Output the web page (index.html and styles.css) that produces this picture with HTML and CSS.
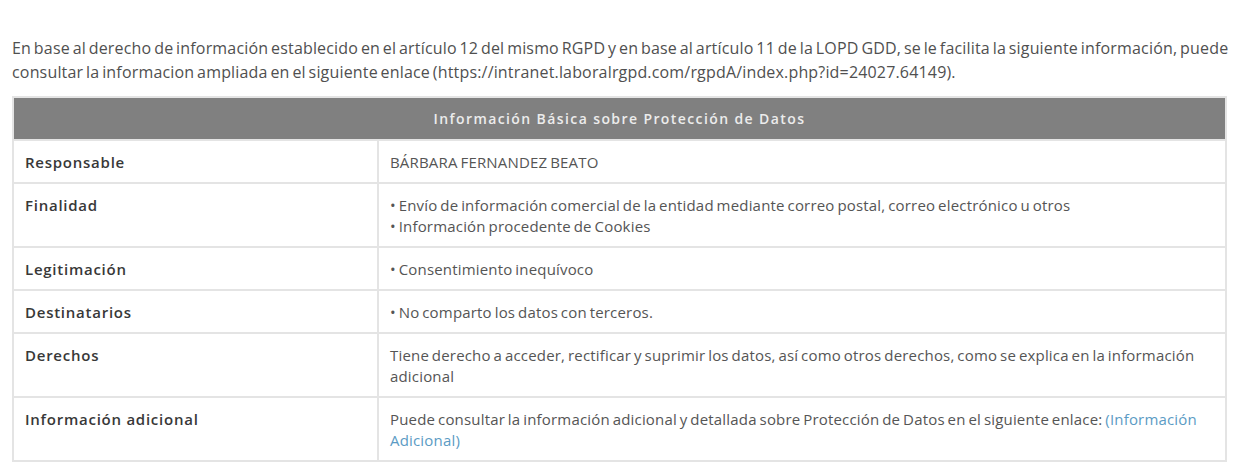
FILE: index.html
```html
<!DOCTYPE html>
<html lang="es">
<head>
  <meta charset="UTF-8" />
  <title>Protección de Datos</title>
  <link rel="stylesheet" href="styles.css">
</head>
<body>
  <p class="intro">En base al derecho de información establecido en el artículo 12 del mismo RGPD y en base al artículo 11 de la LOPD GDD, se le facilita la siguiente información, puede consultar la informacion ampliada en el siguiente enlace (https://intranet.laboralrgpd.com/rgpdA/index.php?id=24027.64149).</p>

  <table class="data-table">
    <thead>
      <tr>
        <th colspan="2">Información Básica sobre Protección de Datos</th>
      </tr>
    </thead>
    <tbody>
      <tr>
        <td class="label">Responsable</td>
        <td class="value">BÁRBARA FERNANDEZ BEATO</td>
      </tr>
      <tr>
        <td class="label">Finalidad</td>
        <td class="value">
          • Envío de información comercial de la entidad mediante correo postal, correo electrónico u otros<br>
          • Información procedente de Cookies
        </td>
      </tr>
      <tr>
        <td class="label">Legitimación</td>
        <td class="value">• Consentimiento inequívoco</td>
      </tr>
      <tr>
        <td class="label">Destinatarios</td>
        <td class="value">• No comparto los datos con terceros.</td>
      </tr>
      <tr>
        <td class="label">Derechos</td>
        <td class="value">Tiene derecho a acceder, rectificar y suprimir los datos, así como otros derechos, como se explica en la información adicional</td>
      </tr>
      <tr>
        <td class="label">Información adicional</td>
        <td class="value">Puede consultar la información adicional y detallada sobre Protección de Datos en el siguiente enlace: <a href="#">(Información Adicional)</a></td>
      </tr>
    </tbody>
  </table>
</body>
</html>
```

FILE: styles.css
```css
body {
  margin: 0;
  padding: 36px 12px 0 12px;
  font-family: "Open Sans", "DejaVu Sans", sans-serif;
  background: #fff;
}
.intro {
  margin: 0 0 12px;
  font-size: 16px;
  line-height: 24px;
  color: #505050;
  letter-spacing: 0.17px;
  word-spacing: -1.5px;
}
.data-table {
  width: 1215px;
  border-collapse: collapse;
  border: 2px solid #e4e4e4;
}
.data-table th {
  background: #808080;
  color: #ececec;
  font-size: 14px;
  font-weight: 600;
  letter-spacing: 1.4px;
  height: 41px;
  padding: 0;
  text-align: center;
  border: 2px solid #e4e4e4;
}
.data-table td {
  border: 2px solid #e4e4e4;
  padding: 11px 11px 9px;
  vertical-align: top;
  line-height: 21px;
}
.label {
  width: 341px;
  font-size: 15px;
  font-weight: 600;
  letter-spacing: 0.75px;
  color: #383838;
}
.value {
  font-size: 15px;
  color: #555;
  letter-spacing: 0.18px;
  word-spacing: -1.2px;
}
.value a {
  color: #5b9bc4;
  text-decoration: none;
}
```
